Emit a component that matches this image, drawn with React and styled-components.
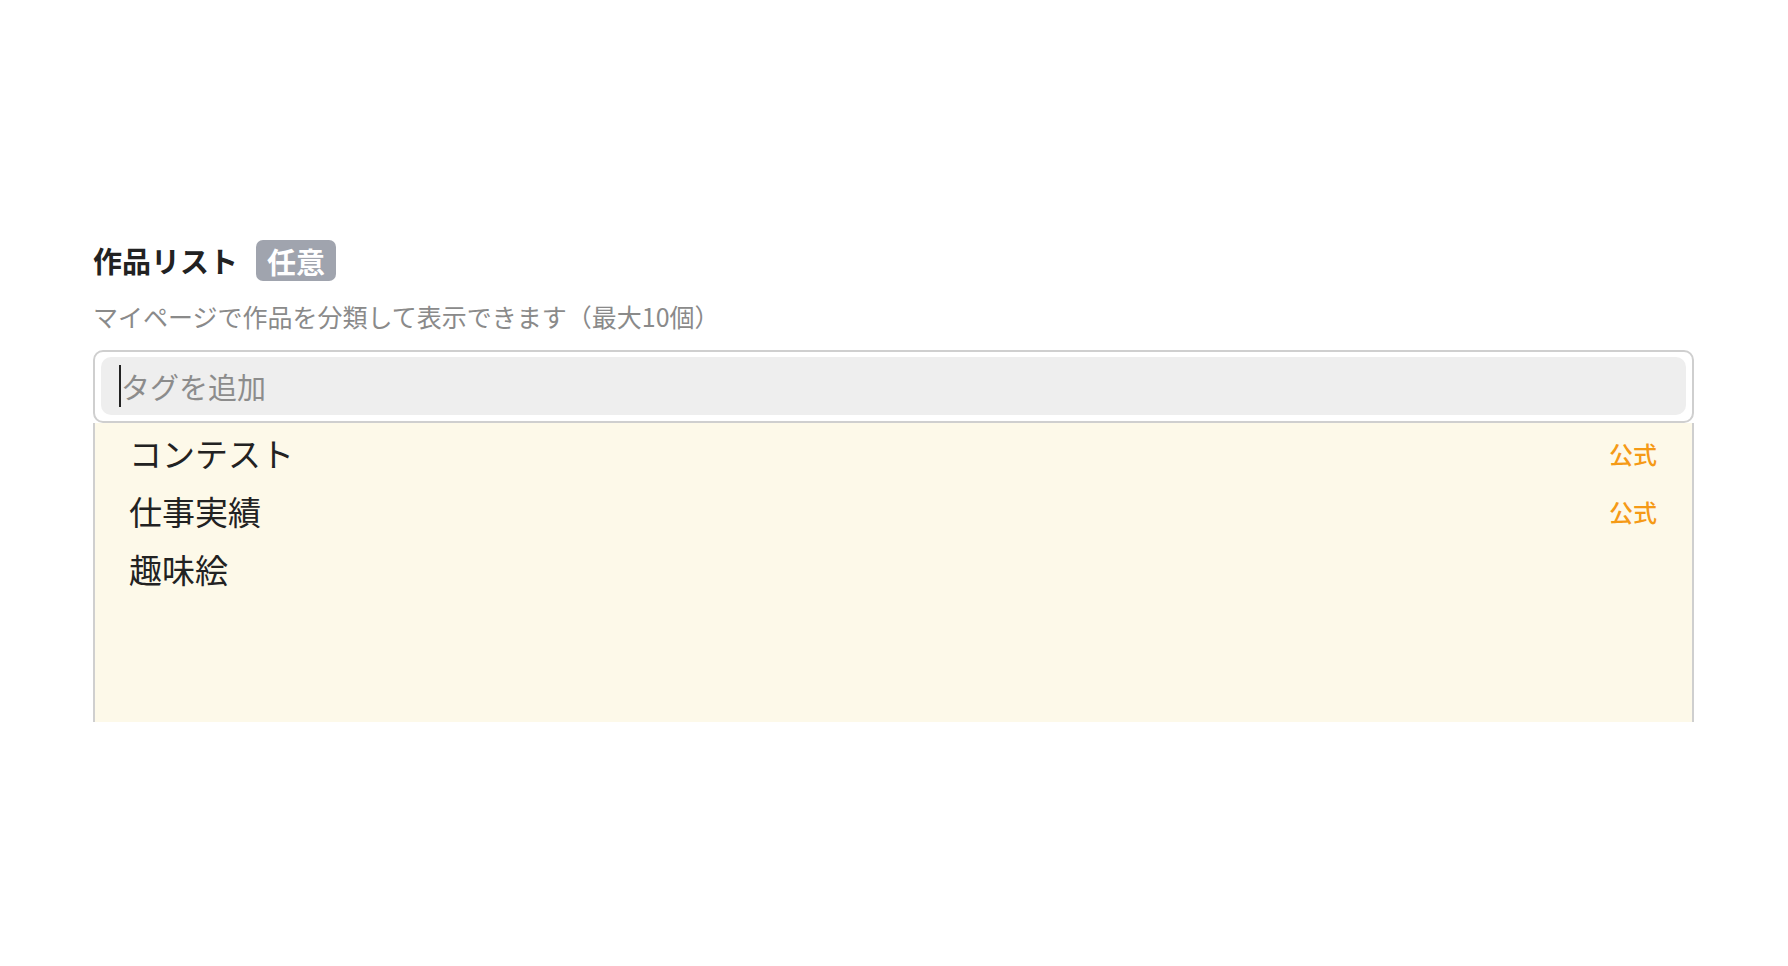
import React from "react"
import styled, { createGlobalStyle } from "styled-components"

const GlobalStyle = createGlobalStyle`
  body {
    margin: 0;
    background: #fff;
    font-family: "Noto Sans CJK JP", "Noto Sans", sans-serif;
    color: #222;
  }
`

const Page = styled.div`
  padding: 240px 94px 0 93px;
`

const FieldHeader = styled.div`
  display: flex;
  align-items: center;
  gap: 18px;
  height: 41px;
`

const FieldLabel = styled.h2`
  margin: 0;
  font-size: 29px;
  font-weight: 700;
  color: #222;
  line-height: 41px;
`

const Badge = styled.span`
  display: inline-flex;
  align-items: center;
  justify-content: center;
  width: 80px;
  height: 41px;
  border-radius: 7px;
  background: #a0a4ae;
  color: #fff;
  font-size: 29px;
  font-weight: 700;
`

const Hint = styled.p`
  margin: 18px 0 0;
  font-size: 25px;
  line-height: 34px;
  color: #8a8a8a;
`

const TagBox = styled.div`
  margin-top: 17px;
  border: 2px solid #cfcfcf;
  border-radius: 10px;
  padding: 5px 6px 6px;
  background: #fff;
`

const InputArea = styled.label`
  display: flex;
  align-items: center;
  height: 58px;
  padding-left: 18px;
  border-radius: 10px;
  background: #eeeeee;
`

const Caret = styled.span`
  width: 2px;
  height: 42px;
  background: #222;
  flex: none;
`

const TagInput = styled.input`
  flex: 1;
  border: none;
  outline: none;
  background: transparent;
  padding: 0;
  font-family: inherit;
  font-size: 29px;
  color: #222;

  &::placeholder {
    color: #8c8c8c;
  }
`

const Suggestions = styled.ul`
  list-style: none;
  margin: 0;
  padding: 1px 0 0;
  height: 299px;
  box-sizing: border-box;
  background: #fdf9e9;
  border-left: 2px solid #cfcfcf;
  border-right: 2px solid #cfcfcf;
`

const SuggestionItem = styled.li`
  display: flex;
  align-items: center;
  justify-content: space-between;
  height: 58px;
  padding: 0 35px 0 34px;
  font-size: 33px;
  color: #222;
`

const Official = styled.span`
  font-size: 24px;
  font-weight: 500;
  color: #f59a16;
`

const tags = [
  { name: "コンテスト", official: true },
  { name: "仕事実績", official: true },
  { name: "趣味絵", official: false },
]

export default function App() {
  return (
    <>
      <GlobalStyle />
      <Page>
        <FieldHeader>
          <FieldLabel>作品リスト</FieldLabel>
          <Badge>任意</Badge>
        </FieldHeader>
        <Hint>マイページで作品を分類して表示できます（最大10個）</Hint>
        <TagBox>
          <InputArea>
            <Caret />
            <TagInput placeholder="タグを追加" />
          </InputArea>
        </TagBox>
        <Suggestions>
          {tags.map((tag) => (
            <SuggestionItem key={tag.name}>
              <span>{tag.name}</span>
              {tag.official && <Official>公式</Official>}
            </SuggestionItem>
          ))}
        </Suggestions>
      </Page>
    </>
  )
}
